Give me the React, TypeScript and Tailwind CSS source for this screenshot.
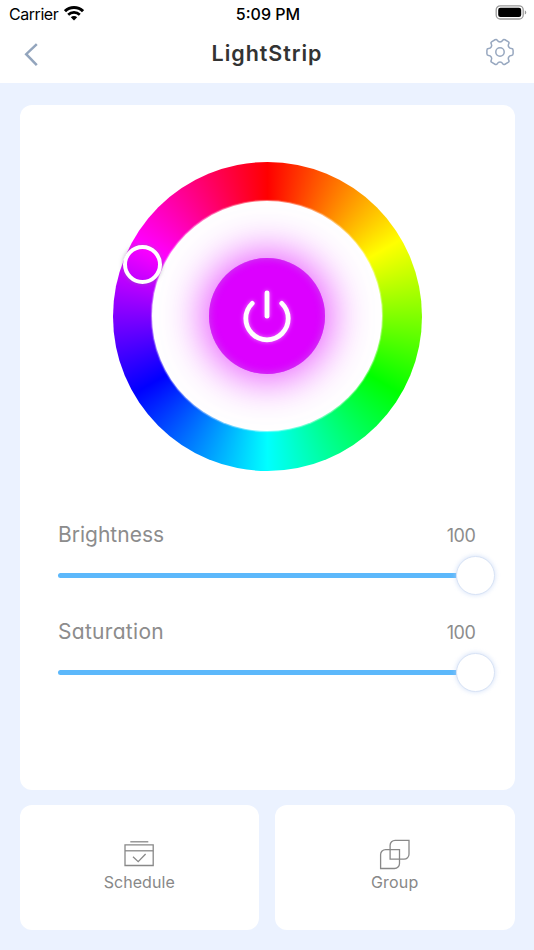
import type { ReactNode } from "react";

function StatusBar() {
  return (
    <div className="flex h-7 items-center justify-between pl-[9px] pr-[7px] font-['Inter',sans-serif] text-black [font-feature-settings:normal]">
      <div className="flex w-24 items-center gap-[6px]">
        <span className="text-[16px] leading-5 tracking-[-0.45px]">Carrier</span>
        <svg width="20" height="15" viewBox="0 0 20 15" fill="none" stroke="black" className="-mt-0.5 shrink-0">
          <path d="M1 5.2a12.9 12.9 0 0 1 18 0" strokeWidth="3" />
          <path d="M4.2 8.7a8.3 8.3 0 0 1 11.6 0" strokeWidth="2.7" />
          <path d="M10 14.4 6.8 11.3a4.6 4.6 0 0 1 6.4 0Z" fill="black" stroke="none" />
        </svg>
      </div>
      <span className="text-[16px] font-medium leading-5 tracking-[0px]">5:09 PM</span>
      <div className="flex w-24 justify-end">
        <svg width="32" height="15" viewBox="0 0 32 15" className="-mt-[3px]">
          <rect x="1.2" y="0.8" width="27" height="13.2" rx="4" fill="none" stroke="#999" strokeWidth="1.3" />
          <rect x="3.2" y="2.8" width="23" height="9.2" rx="2.2" fill="black" />
          <path d="M29.8 5.2c2 .8 2 3.6 0 4.4Z" fill="#999" />
        </svg>
      </div>
    </div>
  );
}

function GearIcon() {
  return (
    <svg width="30" height="30" viewBox="-15 -15 30 30" fill="none" stroke="#97a7bf" strokeWidth="1.5">
      {[0, 60, 120, 180, 240, 300].map((angle) => (
        <path
          key={angle}
          transform={`rotate(${angle})`}
          d="M8.7-5.1C9.4-3.9 10.3-3.5 11.4-3.5Q13.1-3.5 13.1-1.8V1.8Q13.1 3.5 11.4 3.5C10.3 3.5 9.4 3.9 8.7 5.1"
        />
      ))}
      <circle r="4.2" />
    </svg>
  );
}

function Header() {
  return (
    <div className="flex h-[55px] items-start justify-between pl-[23px] pr-[19px]">
      <svg width="30" height="26" viewBox="0 0 30 26" fill="none" stroke="#93a5bd" strokeWidth="2.5" className="mt-[13px]">
        <path d="M13.8 3.1 3.2 13.2l10.6 10.9" />
      </svg>
      <h1 className="mr-1 mt-[9px] text-[21.5px] font-semibold leading-8 tracking-[0.95px] text-[#333]">LightStrip</h1>
      <div className="mt-[9px]">
        <GearIcon />
      </div>
    </div>
  );
}

function ColorWheel() {
  return (
    <div className="relative mx-auto flex size-[309px] items-center justify-center rounded-full bg-[conic-gradient(#f00,#ff0,#0f0,#0ff,#00f,#f0f,#f00)]">
      <div className="flex size-[230px] items-center justify-center rounded-full bg-white shadow-[0_0_1px_1px_rgba(255,255,255,0.5)]">
        <div className="flex size-[116px] items-center justify-center rounded-full bg-[#dc00ff] shadow-[0_0_44px_5px_rgba(220,0,255,0.72),inset_0_0_9px_rgba(200,85,235,0.85)]">
          <svg
            width="64"
            height="64"
            viewBox="0 0 64 64"
            fill="none"
            stroke="white"
            strokeWidth="4.8"
            strokeLinecap="round"
            className="drop-shadow-[0_0_2px_rgba(255,255,255,0.5)]"
          >
            <path d="M32 8.8v23.4" />
            <path d="M17.2 19.4a21.2 21.2 0 1 0 29.6 0" />
          </svg>
        </div>
      </div>
      <div className="absolute left-[10px] top-[83px] size-[39px] rounded-full border-4 border-white shadow-[0_0_4px_rgba(130,130,150,0.55)]" />
    </div>
  );
}

function Slider({ label, value, spacing }: { label: string; value: number; spacing: string }) {
  return (
    <div className="h-[97px]">
      <div className="flex h-8 items-center justify-between text-[#8c8c8c]">
        <span className={`text-[21px] ${spacing}`}>{label}</span>
        <span className="text-[18px] tracking-[-0.4px]">{value}</span>
      </div>
      <div className="relative mt-[5px] flex h-[39px] items-center">
        <div className="h-[5px] rounded-full bg-[#5cb8fb]" style={{ width: `${value}%` }} />
        <div className="absolute -right-[19px] size-[39px] rounded-full border border-[#d8e3f5] bg-white shadow-[0_0_5px_rgba(190,210,245,0.7)]" />
      </div>
    </div>
  );
}

function ActionCard({ label, spacing, children }: { label: string; spacing: string; children: ReactNode }) {
  return (
    <button className="flex h-[125px] flex-1 flex-col items-center rounded-xl bg-white pt-[34px] text-[#888]">
      {children}
      <span className={`-mt-px text-[16px] leading-6 ${spacing}`}>{label}</span>
    </button>
  );
}

export default function App() {
  return (
    <div className="h-[950px] w-[534px] overflow-hidden bg-[#ebf2ff] font-['Inter',sans-serif] [font-feature-settings:'cv11','ss03']">
      <header className="h-[83px] bg-white">
        <StatusBar />
        <Header />
      </header>

      <main className="flex flex-col gap-[15px] px-[19.5px] pt-[22px]">
        <section className="h-[685px] rounded-xl bg-white pt-[56.5px]">
          <ColorWheel />
          <div className="mt-[48.5px] pl-[38.5px] pr-[39px]">
            <Slider label="Brightness" value={100} spacing="tracking-[0px]" />
            <Slider label="Saturation" value={100} spacing="tracking-[0.3px]" />
          </div>
        </section>

        <div className="flex gap-4">
          <ActionCard label="Schedule" spacing="tracking-[0.05px]">
            <svg width="32" height="32" viewBox="0 0.6 32 32" fill="none" stroke="currentColor" strokeWidth="1.3">
              <path d="M7.3 3.4h18" />
              <path d="M2 6.4h28.2v20.7H2z" />
              <path d="M2 12.4h28.2" />
              <path d="m10 18.3 5.2 4.9 7.4-7.6" />
            </svg>
          </ActionCard>
          <ActionCard label="Group" spacing="tracking-[0.2px]">
            <svg width="32" height="32" viewBox="0.2 0.2 32 32" fill="none" stroke="currentColor" strokeWidth="1.3">
              <path d="M16.3 1.5h13.9v13.9a5 5 0 0 1-5 5H11.3V6.5a5 5 0 0 1 5-5Z" />
              <path d="M6.8 10.8h13.9v13.9a5 5 0 0 1-5 5H1.8V15.8a5 5 0 0 1 5-5Z" />
            </svg>
          </ActionCard>
        </div>
      </main>
    </div>
  );
}
